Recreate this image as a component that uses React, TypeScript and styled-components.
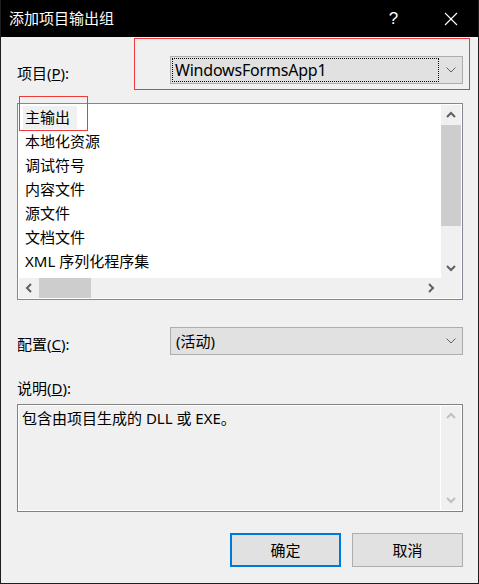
import React from "react";
import styled, { createGlobalStyle } from "styled-components";

const Global = createGlobalStyle`
  html, body { margin: 0; padding: 0; background: #f0f0f0; }
  * { box-sizing: border-box; }
`;

const FONT = `"Noto Sans", "Noto Sans CJK SC", sans-serif`;

const Window = styled.div`
  position: relative;
  width: 479px;
  height: 584px;
  border: 1px solid #1e1e1e;
  border-top: none;
  background: #f0f0f0;
  font-family: ${FONT};
  font-size: 15px;
  color: #000;
  display: flex;
  flex-direction: column;
  overflow: hidden;
`;

const TitleBar = styled.div`
  height: 37px;
  background: #000;
  color: #fff;
  display: flex;
  align-items: center;
  padding-left: 9px;
  margin: 0 -1px;
  flex-shrink: 0;
`;

const Title = styled.div`
  flex: 1;
  font-size: 15px;
  padding-bottom: 2px;
`;

const TitleButton = styled.div`
  width: 57px;
  height: 37px;
  display: flex;
  align-items: center;
  justify-content: center;
  color: #fff;
  font-size: 17px;
  font-family: "Liberation Sans", sans-serif;
`;

const Body = styled.div`
  flex: 1;
  display: flex;
  flex-direction: column;
  padding: 0 15px 0 16px;
`;

const FieldRow = styled.div<{ $mt: number }>`
  display: flex;
  align-items: center;
  height: 28px;
  margin-top: ${(p) => p.$mt}px;
`;

const Label = styled.div`
  width: 153px;
  padding-top: 5px;
  line-height: 20px;
`;

const Combo = styled.div`
  flex: 1;
  height: 28px;
  background: #e1e1e1;
  border: 1px solid #adadad;
  display: flex;
  align-items: center;
  padding: 0 0 0 1px;
`;

const ComboText = styled.div<{ $focused?: boolean; $large?: boolean }>`
  flex: 1;
  height: 24px;
  display: flex;
  align-items: center;
  padding-left: ${(p) => (p.$focused ? "2px" : "3px")};
  font-size: ${(p) => (p.$large ? "16px" : "15px")};
  letter-spacing: ${(p) => (p.$large ? "-0.2px" : "0")};
  border: 1px ${(p) => (p.$focused ? "dotted #000" : "solid transparent")};
  padding-bottom: 1px;
`;

const ComboArrow = styled.div`
  width: 23px;
  display: flex;
  align-items: center;
  justify-content: center;
`;

const ListBox = styled.div`
  margin-top: 19px;
  height: 197px;
  border: 1px solid #828790;
  padding: 1px;
  background: #fff;
  display: grid;
  grid-template-columns: 1fr 20px;
  grid-template-rows: 1fr 20px;
`;

const Items = styled.div`
  overflow: hidden;
  display: flex;
  flex-direction: column;
`;

const Item = styled.div`
  height: 24px;
  flex-shrink: 0;
  display: flex;
  align-items: center;
  padding-left: 4px;
`;

const ItemText = styled.span<{ $selected?: boolean }>`
  height: 23px;
  display: flex;
  align-items: center;
  padding: 0 7px 1px 2px;
  background: ${(p) => (p.$selected ? "#f0f0f0" : "transparent")};
`;

const VScroll = styled.div`
  background: #f0f0f0;
  display: flex;
  flex-direction: column;
`;

const HScroll = styled.div`
  background: #f0f0f0;
  display: flex;
`;

const Corner = styled.div`
  background: #f0f0f0;
`;

const ArrowBtn = styled.div`
  width: 20px;
  height: 20px;
  flex-shrink: 0;
  display: flex;
  align-items: center;
  justify-content: center;
`;

const Track = styled.div<{ $vertical?: boolean }>`
  flex: 1;
  display: flex;
  flex-direction: ${(p) => (p.$vertical ? "column" : "row")};
`;

const Thumb = styled.div<{ $len: number; $vertical?: boolean }>`
  background: #cdcdcd;
  ${(p) =>
    p.$vertical
      ? `height: ${p.$len}px; width: 100%;`
      : `width: ${p.$len}px; height: 100%;`}
`;

const SectionLabel = styled.div`
  margin-top: 23px;
  line-height: 20px;
  height: 20px;
`;

const DescBox = styled.div`
  margin-top: 6px;
  height: 108px;
  border: 1px solid #828282;
  box-shadow: inset 0 0 0 1px #ffffff;
  background: #f0f0f0;
  display: grid;
  grid-template-columns: 1fr 20px;
  padding: 1px;
`;

const DescText = styled.div`
  padding: 2px 0 0 3px;
  line-height: 20px;
  border-right: 1px solid #ffffff;
`;

const ButtonRow = styled.div`
  margin-top: 21px;
  display: flex;
  justify-content: flex-end;
  gap: 11px;
`;

const Button = styled.div<{ $default?: boolean }>`
  width: 111px;
  height: 34px;
  background: #e1e1e1;
  border: ${(p) => (p.$default ? "2px solid #0078d7" : "1px solid #adadad")};
  display: flex;
  align-items: center;
  justify-content: center;
  padding-bottom: 1px;
`;

const Annotation = styled.div<{ $x: number; $y: number; $w: number; $h: number }>`
  position: absolute;
  left: ${(p) => p.$x}px;
  top: ${(p) => p.$y}px;
  width: ${(p) => p.$w}px;
  height: ${(p) => p.$h}px;
  border: 1px solid #f03a3a;
  pointer-events: none;
`;

type Dir = "up" | "down" | "left" | "right";

const Chevron: React.FC<{ dir: Dir; color?: string }> = ({ dir, color = "#606060" }) => {
  const pts: Record<Dir, string> = {
    up: "1,6 5,2 9,6",
    down: "1,2 5,6 9,2",
    left: "6,1 2,5 6,9",
    right: "2,1 6,5 2,9",
  };
  const horiz = dir === "up" || dir === "down";
  return (
    <svg width={horiz ? 10 : 8} height={horiz ? 8 : 10} viewBox={horiz ? "0 0 10 8" : "0 0 8 10"}>
      <polyline points={pts[dir]} fill="none" stroke={color} strokeWidth={2} />
    </svg>
  );
};

const ComboChevron = () => (
  <svg width="10" height="6" viewBox="0 0 10 6">
    <polyline points="0.5,0.5 5,5 9.5,0.5" fill="none" stroke="#606060" strokeWidth="1" />
  </svg>
);

const CloseIcon = () => (
  <svg width="14" height="14" viewBox="0 0 14 14">
    <line x1="1" y1="1" x2="13" y2="13" stroke="#fff" strokeWidth="1.1" />
    <line x1="13" y1="1" x2="1" y2="13" stroke="#fff" strokeWidth="1.1" />
  </svg>
);

const items = ["主输出", "本地化资源", "调试符号", "内容文件", "源文件", "文档文件", "XML 序列化程序集"];

export default function App() {
  return (
    <>
      <Global />
      <Window>
        <TitleBar>
          <Title>添加项目输出组</Title>
          <TitleButton>?</TitleButton>
          <TitleButton>
            <CloseIcon />
          </TitleButton>
        </TitleBar>
        <Body>
          <FieldRow $mt={19}>
            <Label>
              项目(<u>P</u>):
            </Label>
            <Combo>
              <ComboText $focused $large>WindowsFormsApp1</ComboText>
              <ComboArrow>
                <ComboChevron />
              </ComboArrow>
            </Combo>
          </FieldRow>

          <ListBox>
            <Items>
              {items.map((it, i) => (
                <Item key={it}>
                  <ItemText $selected={i === 0}>{it}</ItemText>
                </Item>
              ))}
            </Items>
            <VScroll>
              <ArrowBtn>
                <Chevron dir="up" />
              </ArrowBtn>
              <Track $vertical>
                <Thumb $vertical $len={101} />
              </Track>
              <ArrowBtn>
                <Chevron dir="down" />
              </ArrowBtn>
            </VScroll>
            <HScroll>
              <ArrowBtn>
                <Chevron dir="left" />
              </ArrowBtn>
              <Track>
                <Thumb $len={52} />
              </Track>
              <ArrowBtn>
                <Chevron dir="right" />
              </ArrowBtn>
            </HScroll>
            <Corner />
          </ListBox>

          <FieldRow $mt={27}>
            <Label>
              配置(<u>C</u>):
            </Label>
            <Combo>
              <ComboText>(活动)</ComboText>
              <ComboArrow>
                <ComboChevron />
              </ComboArrow>
            </Combo>
          </FieldRow>

          <SectionLabel>
            说明(<u>D</u>):
          </SectionLabel>
          <DescBox>
            <DescText>包含由项目生成的 DLL 或 EXE。</DescText>
            <VScroll>
              <ArrowBtn>
                <Chevron dir="up" color="#c0c0c0" />
              </ArrowBtn>
              <Track $vertical />
              <ArrowBtn>
                <Chevron dir="down" color="#c0c0c0" />
              </ArrowBtn>
            </VScroll>
          </DescBox>

          <ButtonRow>
            <Button $default>确定</Button>
            <Button>取消</Button>
          </ButtonRow>
        </Body>
        <Annotation $x={133} $y={38} $w={336} $h={52} />
        <Annotation $x={18} $y={96} $w={69} $h={35} />
      </Window>
    </>
  );
}
